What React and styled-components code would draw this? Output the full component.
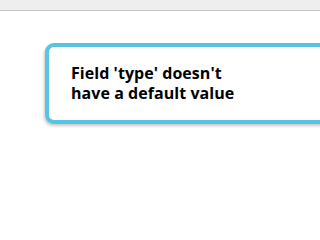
import React from 'react'
import styled, { createGlobalStyle } from 'styled-components'

const Global = createGlobalStyle`
  html, body {
    margin: 0;
    padding: 0;
    background: #ffffff;
    overflow: hidden;
  }
  body {
    font-family: "Open Sans", "Noto Sans", sans-serif;
  }
`

const Page = styled.div`
  width: 100%;
  height: 219px;
  display: flex;
  flex-direction: column;
  overflow: hidden;
`

const TopBar = styled.div`
  height: 10px;
  background: #eeeeee;
  border-bottom: 1px solid #c6c6c6;
  flex-shrink: 0;
`

const Stage = styled.div`
  padding: 32px 0 0 45px;
  margin-right: -20px;
`

const Toast = styled.div`
  border: 4px solid #58c4e4;
  border-radius: 9px;
  background: #ffffff;
  box-shadow: -1px 2px 3px rgba(0, 0, 0, 0.22);
  padding: 16px 22px 17px 22px;
`

const Message = styled.p`
  margin: 0;
  width: 168px;
  font-family: "Open Sans", "Noto Sans", sans-serif;
  font-weight: 700;
  font-size: 16px;
  letter-spacing: 0.05px;
  line-height: 20px;
  color: #000000;
`

export default function App() {
  return (
    <Page>
      <Global />
      <TopBar />
      <Stage>
        <Toast>
          <Message>Field 'type' doesn't have a default value</Message>
        </Toast>
      </Stage>
    </Page>
  )
}
